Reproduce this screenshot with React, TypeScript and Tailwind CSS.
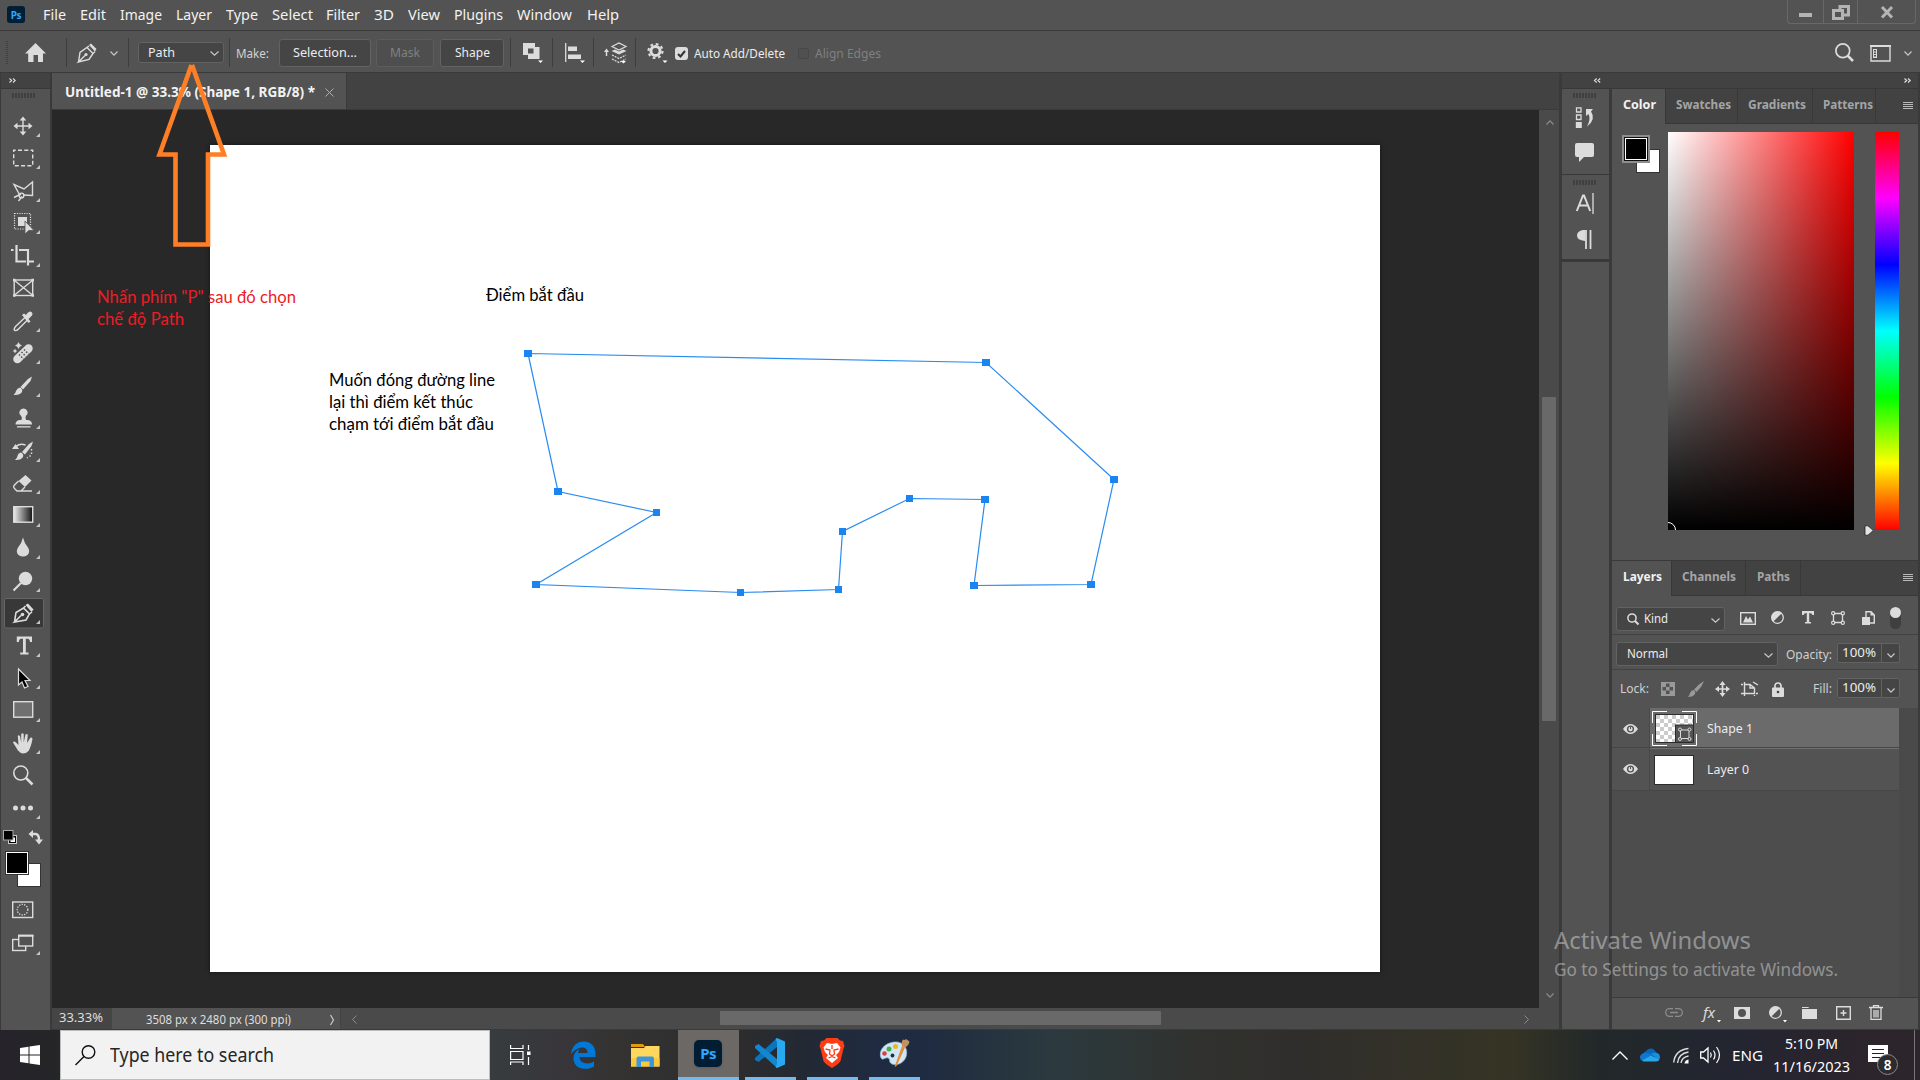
import React, { useLayoutEffect, useRef } from "react";

type Kids = { children?: React.ReactNode };

/* Single line of text condensed or widened to fill the width given by its class. */
function T({ className = "", children }: { className?: string } & Kids) {
  const box = useRef<HTMLSpanElement>(null);
  const inner = useRef<HTMLSpanElement>(null);
  useLayoutEffect(() => {
    const fit = () => {
      const b = box.current;
      const i = inner.current;
      if (!b || !i || !i.offsetWidth) return;
      i.style.transform = "none";
      const natural = i.getBoundingClientRect().width;
      i.style.transform = `scaleX(${b.getBoundingClientRect().width / natural})`;
    };
    fit();
    document.fonts?.ready.then(fit);
  }, []);
  return (
    <span ref={box} className={"block shrink-0 whitespace-nowrap " + className}>
      <span ref={inner} className="inline-block origin-left">
        {children}
      </span>
    </span>
  );
}

function Svg({ w, h, className = "", children }: { w: number; h: number; className?: string } & Kids) {
  return (
    <svg width={w} height={h} viewBox={`0 0 ${w} ${h}`} className={"block shrink-0 overflow-visible " + className} fill="none">
      {children}
    </svg>
  );
}

const L = "#dcdcdc";

function Chevron({ className = "", color = "#c8c8c8", w = 8 }: { className?: string; color?: string; w?: number }) {
  return (
    <Svg w={w} h={5} className={className}>
      <path d={`M.5 .5 L${w / 2} 4.2 L${w - 0.5} .5`} stroke={color} strokeWidth="1.2" />
    </Svg>
  );
}

function Sep({ className = "" }: { className?: string }) {
  return <div className={"h-[29px] w-px shrink-0 bg-[#3d3d3d] " + className} />;
}

const menus: [string, string][] = [
  ["File", "ml-[18px] w-[23px]"],
  ["Edit", "ml-[14px] w-[26px]"],
  ["Image", "ml-[14px] w-[42px]"],
  ["Layer", "ml-[14px] w-[36px]"],
  ["Type", "ml-[14px] w-[32px]"],
  ["Select", "ml-[14px] w-[41px]"],
  ["Filter", "ml-[13px] w-[34px]"],
  ["3D", "ml-[14px] w-[20px]"],
  ["View", "ml-[14px] w-[32px]"],
  ["Plugins", "ml-[14px] w-[49px]"],
  ["Window", "ml-[14px] w-[55px]"],
  ["Help", "ml-[15px] w-[32px]"],
];

function MenuBar() {
  return (
    <div className="flex h-[31px] shrink-0 border-b border-[#3a3a3a] bg-[#535353] text-[15px] leading-[28px] text-[#f2f2f2]">
      <div className="mt-[6px] ml-[7px] flex h-[17px] w-[18px] items-center justify-center rounded-[3px] bg-[#001e36] text-[10px] font-bold tracking-tight text-[#31a8ff]">
        <span className="leading-none">Ps</span>
      </div>
      {menus.map(([m, c]) => (
        <T key={m} className={c}>
          {m}
        </T>
      ))}
      <div className="mr-[4px] ml-auto flex h-[24px] w-[129px] rounded-b-[4px] border-x border-b border-[#686868]">
        <div className="w-[36px] border-r border-[#686868]">
          <div className="mt-[13px] ml-[11px] h-[4px] w-[13px] bg-[#b4b4b4]" />
        </div>
        <div className="w-[34px] border-r border-[#686868]">
          <Svg w={18} h={15} className="mt-[5px] ml-[8px]">
            <path d="M8 4V1.5H16.5V10H12" stroke="#b4b4b4" strokeWidth="3" />
            <rect x="1.5" y="5.5" width="9" height="8" stroke="#b4b4b4" strokeWidth="3" />
          </Svg>
        </div>
        <Svg w={14} h={11} className="mt-[7px] ml-[22px]">
          <path d="M2 0L12 10.5M12 0L2 10.5" stroke="#b4b4b4" strokeWidth="3" />
        </Svg>
      </div>
    </div>
  );
}

function OptionsBar() {
  return (
    <div className="flex h-[42px] shrink-0 items-center border-b border-[#3a3a3a] bg-[#535353] pt-[2px] text-[12.5px] text-[#ececec]">
      <Svg w={2} h={24} className="ml-[6px]">
        <path d="M1 0V24" stroke="#404040" strokeWidth="2" strokeDasharray="1 1" />
      </Svg>
      <Svg w={21} h={19} className="ml-[17px]">
        <path d="M10.5 0L21 10.5H18V19H13V12H8.5V19H3.2V10.5H0Z" fill={L} />
      </Svg>
      <Sep className="ml-[20px]" />
      <Svg w={20} h={20} className="ml-[10px]">
        <path d="M1.5 19L3 9.5L10 4.5L16 10.5L12 16.5L1.5 19L8 12.5M10 4.5L12 3M16 10.5L18 8.5" stroke={L} strokeWidth="1.4" />
        <circle cx="9" cy="11.5" r="1.6" fill={L} />
        <path d="M12 2L14 .5L19.5 6L18 8.5Z" fill={L} />
      </Svg>
      <Chevron className="mt-px ml-[13px]" />
      <Sep className="ml-[10px]" />
      <div className="ml-[9px] flex h-[21px] w-[86px] items-center rounded-[3px] border border-[#626262] bg-[#454545]">
        <T className="mt-px ml-[9px] w-[27px]">Path</T>
        <Chevron className="mt-[2px] ml-[35px]" w={9} />
      </div>
      <Sep className="ml-[5px]" />
      <T className="mt-[3px] ml-[6px] w-[33px] text-[#d2d2d2]">Make:</T>
      <div className="ml-[10px] flex h-[28px] w-[92px] items-center justify-center rounded-[3px] border border-[#626262] bg-[#454545]">
        <T className="mt-px w-[64px]">Selection...</T>
      </div>
      <div className="ml-[5px] flex h-[28px] w-[58px] items-center justify-center rounded-[3px] border border-[#5c5c5c] bg-[#4e4e4e] text-[#808080]">
        <T className="mt-px w-[30px]">Mask</T>
      </div>
      <div className="ml-[6px] flex h-[28px] w-[64px] items-center justify-center rounded-[3px] border border-[#626262] bg-[#454545]">
        <T className="mt-px w-[35px]">Shape</T>
      </div>
      <Sep className="ml-[6px]" />
      <Svg w={20} h={20} className="mt-px ml-[12px]">
        <path d="M0 0H12V4H16.5V16H5V12H0ZM5 5.5V10.5H10.5V5.5Z" fill={L} fillRule="evenodd" />
        <path d="M15 17.5h5l-2.5 2.5z" fill="#fff" />
      </Svg>
      <Sep className="ml-[9px]" />
      <Svg w={20} h={20} className="mt-px ml-[12px]">
        <path d="M.7 0V19" stroke={L} strokeWidth="1.3" />
        <path d="M3 3.5H12V8H3ZM3 11.5H16V16H3Z" fill={L} />
        <path d="M15 17.5h5l-2.5 2.5z" fill="#fff" />
      </Svg>
      <Sep className="ml-[8px]" />
      <Svg w={23} h={22} className="ml-[10px]">
        <path d="M2.5 14V8" stroke={L} strokeWidth="1.5" />
        <path d="M0 10L2.500 6.500L5 10Z" fill={L} />
        <path d="M8 4.500L15 1L22 4.500L15 8Z" stroke={L} strokeWidth="1.2" />
        <path d="M7.500 9L15 12.500L22.500 9L19 7.500L15 9.500L11 7.500Z" fill={L} />
        <path d="M8 13L15 16.500L22 13M8 17L15 20.500L22 17" stroke={L} strokeWidth="1.3" strokeDasharray="2 1" />
        <path d="M17 19h5l-2.500 2.500z" fill="#fff" />
      </Svg>
      <Sep className="ml-[8px]" />
      <Svg w={20} h={20} className="mt-px ml-[11px]">
        <circle cx="8.500" cy="8" r="4.600" stroke={L} strokeWidth="3" />
        <circle cx="8.500" cy="8" r="7" stroke={L} strokeWidth="2.200" strokeDasharray="2.750 2.750" />
        <path d="M15.500 17.500h5l-2.500 2.500z" fill="#fff" />
      </Svg>
      <div className="mt-[2px] ml-[8px] flex size-[13px] items-center justify-center rounded-[3px] bg-[#dcdcdc]">
        <Svg w={9} h={8}>
          <path d="M1 4L3.500 6.500L8 1" stroke="#333" strokeWidth="2" />
        </Svg>
      </div>
      <T className="mt-[4px] ml-[6px] w-[91px]">Auto Add/Delete</T>
      <div className="mt-[2px] ml-[13px] size-[11px] rounded-[2px] border border-[#484848] bg-[#505050]" />
      <T className="mt-[4px] ml-[6px] w-[66px] text-[#808080]">Align Edges</T>
      <Svg w={19} h={19} className="mr-[16px] ml-auto">
        <circle cx="7.800" cy="7.800" r="6.900" stroke={L} strokeWidth="1.700" />
        <path d="M12.500 12.500L18 18" stroke={L} strokeWidth="2.500" />
      </Svg>
      <Svg w={21} h={17} className="mt-[2px] mr-[13px]">
        <path d="M1 1H20V16H1Z" stroke={L} strokeWidth="1.400" />
        <path d="M0 1H21" stroke={L} strokeWidth="2" />
        <path d="M3 4H7V13H3Z" fill={L} />
        <path d="M5 5V12.500" stroke="#535353" strokeWidth="2" strokeDasharray="1.500 1" />
      </Svg>
      <Chevron className="mt-[2px] mr-[8px]" />
    </div>
  );
}

/* Tool glyphs are drawn around the point (23, 16) of a 50 x 32 cell. */
const S = { stroke: L, strokeWidth: 1.4 };
const tools: React.ReactNode[] = [
  <g>
    <path d="M23 9V23M16 16H30" {...S} />
    <path d="M23 6.500l3.300 4h-6.600zM23 25.500l3.300-4h-6.600zM13.500 16l4-3.300v6.600zM32.500 16l-4-3.300v6.600z" fill={L} />
  </g>,
  <rect x="13.700" y="8.200" width="19" height="15.500" {...S} strokeDasharray="4 2.300" strokeDashoffset="2" />,
  <g {...S}>
    <path d="M20 20.500L14 9.500L24 14L32.500 7V20.500L23 20" />
    <circle cx="21.500" cy="20.500" r="2.400" />
    <path d="M14 22.500L21 19M18.500 26L22 21.500" />
  </g>,
  <g>
    <rect x="14.500" y="6.500" width="16" height="15.500" stroke={L} strokeWidth="1.200" strokeDasharray="1.200 1.200" />
    <path d="M18 10H27V16L25 15V19H18Z" fill={L} />
    <path d="M25 14L34 23.500H28.800L25 27Z" fill={L} stroke="#535353" strokeWidth=".8" />
  </g>,
  <g stroke={L} strokeWidth="2.200" transform="translate(0 -1)">
    <path d="M16.500 6V22.500H26M29 22.500H34" />
    <path d="M11 11H13.500M19 11H28V26.500" />
  </g>,
  <g {...S}>
    <rect x="14.200" y="8" width="18.500" height="15.500" />
    <path d="M14 8L33 23.500M33 8L14 23.500" />
    <path d="M13 8h2.500M13 23.500h2.500M31.500 8h2.500M31.500 23.500h2.500" strokeWidth="2.500" />
  </g>,
  <g>
    <path d="M25 12.500L15.500 21.500Q13 25 15 25.500Q17 26 19 23.500L27.500 15" {...S} />
    <path d="M22 10L24 8.500L26 10Q28 6.500 30.500 6.500Q33.500 8 32 10.500L28.500 14L30.500 16.500L28.500 18Z" fill={L} />
  </g>,
  <g>
    <path d="M17.500 22L28.500 11.500" stroke={L} strokeWidth="8.500" strokeLinecap="round" />
    <path d="M21.500 15L26 19.500M19 17.500L23.500 22M24 12.500L28.500 17" stroke="#535353" strokeWidth="1.500" strokeDasharray="1.500 1.500" />
    <path d="M18.500 5l1.200 2.300 2.300 1.200-2.300 1.200-1.200 2.300-1.200-2.300-2.300-1.200 2.300-1.200zM15 11.500l.8 1.700 1.700.8-1.700.8-.8 1.700-.8-1.700-1.700-.8 1.700-.8z" fill={L} />
  </g>,
  <g fill={L}>
    <path d="M32 6.500L30.500 11L23 19.500L20.500 17L28 9Z" />
    <path d="M20 17.500Q23 19 22 22Q20 25.500 13.500 25Q15.500 23.500 16 21Q17 18 20 17.500Z" />
  </g>,
  <g fill={L}>
    <path d="M23.500 6.500a4 4 0 0 1 2.500 7.200Q25 15 26 18H28Q32 18.500 32 22.500H15.500Q15.500 18.500 19.500 18H21.500Q22.500 15 21 13.700A4 4 0 0 1 23.500 6.500Z" />
    <path d="M17 24.200H30.500V25.500H17Z" />
  </g>,
  <g fill={L}>
    <path d="M33 6.500L31.500 11L25 19.500L22 17L29 9Z" />
    <path d="M21 17.500Q24 19 23 22Q21 25.500 15 25Q17 23.500 17.500 21Q18 18 21 17.500Z" />
    <path d="M12 14L15.500 9L19 14Z" />
    <path d="M16 11.500Q20 8 25.500 10" stroke={L} strokeWidth="1.400" fill="none" />
    <path d="M31.500 14V20L27 23" stroke={L} strokeWidth="1.500" strokeDasharray="1.500 2" fill="none" />
  </g>,
  <g>
    <path d="M25.500 8L31.500 13.500L25 20L18.500 14Z" fill={L} />
    <path d="M18.500 14L14 18.500Q13 20 14.500 21.500L17 24H21L25 20M17 24H32" {...S} />
  </g>,
  <g>
    <rect x="13.700" y="6.700" width="19" height="15.500" fill="url(#gradtool)" {...S} />
  </g>,
  <path d="M23 6.500Q24 11.500 28 16.500Q30.500 21 27.500 24Q23 27 18.500 24Q15.500 21 18 16.500Q22 11.500 23 6.500Z" fill={L} transform="translate(0 -1)" />,
  <g>
    <circle cx="25.500" cy="13.500" r="6.700" fill={L} />
    <path d="M13.500 25.500L21 18" stroke={L} strokeWidth="2.200" />
  </g>,
  <g>
    <path d="M14.500 25L16 15.500L23.500 11L29.500 17L26 23L14.500 25L21 18.500M23.500 11L25.500 9M29.500 17L32 15" {...S} strokeWidth="1.600" />
    <circle cx="22.500" cy="17.500" r="1.800" fill={L} />
    <path d="M25.500 8L28 6.500L33.500 12.500L31.500 15Z" fill={L} />
  </g>,
  <path d="M16.800 6.500H32V12H30Q30 9 28 8.700H25.800V22.500H28.500V24.500H20.200V22.500H23V8.700H20.800Q18.800 9 18.800 12H16.800Z" fill={L} />,
  <path d="M18.500 7L30 18.500H25L28 24.500L24.500 26L22 20L18.500 23Z" fill="#000" stroke={L} strokeWidth="1.200" />,
  <rect x="13.700" y="6.700" width="19" height="15.500" fill="#707070" {...S} />,
  <path d="M18 23.500L13 15.500Q13.500 14 15.500 15L18.500 18L17.800 9Q18.500 7.500 20 9L21.200 15.500V7Q22.500 5.500 23.700 7V15.500L25.500 7.500Q27 6.500 27.800 8L27 16L30.500 10.500Q32.500 10 32.500 12Q31 20 28.500 24Q26 26.500 23 26.500Q20 26 18 23.500Z" fill={L} />,
  <g>
    <circle cx="20.800" cy="13" r="7" {...S} strokeWidth="1.600" />
    <path d="M26 18L32.500 24.500" stroke={L} strokeWidth="2.500" />
  </g>,
  <g fill={L}>
    <circle cx="15.500" cy="16" r="2.500" />
    <circle cx="23" cy="16" r="2.500" />
    <circle cx="30.500" cy="16" r="2.500" />
  </g>,
];

function Grip({ className = "" }: { className?: string }) {
  return (
    <Svg w={24} h={5} className={className}>
      <path d="M0 2.500H24" stroke="#404040" strokeWidth="5" strokeDasharray="2 1" />
    </Svg>
  );
}

function ToolColumn() {
  return (
    <div className="flex w-[50px] shrink-0 flex-col border-l border-[#3a3a3a] bg-[#535353]">
      <div className="flex h-[16px] items-center border-b border-[#383838] bg-[#424242] pl-[8px]">
        <Svg w={7} h={5}>
          <path d="M.5 .5L2.700 2.500L.5 4.500M4 .5L6.200 2.500L4 4.500" stroke="#dcdcdc" strokeWidth="1.100" />
        </Svg>
      </div>
      <Grip className="mt-[4px] ml-[11px]" />
      <div className="mt-[12px] -ml-px flex flex-col">
        {tools.map((t, i) => (
          <div key={i} className={i % 2 ? "h-[33px]" : "h-[32px]"}>
            <Svg w={50} h={32}>
              <defs>
                <linearGradient id="gradtool">
                  <stop offset="0" stopColor="#eee" />
                  <stop offset="1" stopColor="#111" />
                </linearGradient>
              </defs>
              {i === 15 && <rect x="4.500" y="1.500" width="39" height="29.500" rx="1.500" fill="#383838" stroke="#666" />}
              {t}
              {i !== 20 && i !== 5 && <path d="M40 23V27H36Z" fill="#c4c4c4" />}
            </Svg>
          </div>
        ))}
      </div>
      <Svg w={50} h={66} className="mt-[3px] -ml-px">
        <g transform="translate(0 -828)">
          <rect x="8.500" y="835.500" width="8" height="8" fill="#000" stroke="#ccc" />
          <rect x="10.500" y="837.500" width="4.500" height="4.500" fill="#fff" />
          <rect x="3.500" y="830.500" width="9.500" height="9.500" fill="#000" stroke="#aaa" />
          <path d="M32 834H36Q39 834.500 39 840" stroke={L} strokeWidth="2.500" />
          <path d="M28.500 834L33 830V838ZM35 839.500H43L39 844.500Z" fill={L} />
          <rect x="17.500" y="863.500" width="23" height="23" fill="#fff" stroke="#333" />
          <rect x="5.500" y="851.500" width="23" height="23" fill="#fff" stroke="#333" />
          <rect x="7" y="853" width="20" height="20" fill="#000" />
        </g>
      </Svg>
      <Svg w={50} h={56} className="-ml-px">
        <g transform="translate(0 -894)">
          <rect x="12.700" y="902" width="20" height="15.500" {...S} />
          <circle cx="22.500" cy="909.700" r="5.300" stroke={L} strokeWidth="1.300" strokeDasharray="1.300 1.300" />
          <rect x="12.700" y="939.500" width="13" height="11" {...S} />
          <rect x="18.700" y="935.500" width="14" height="10.500" fill="#535353" {...S} />
          <path d="M18 935.700H33.500" stroke={L} strokeWidth="2" />
          <path d="M40 951V955H36Z" fill="#c4c4c4" />
        </g>
      </Svg>
    </div>
  );
}

const pts: [number, number][] = [
  [528, 353.5], [986, 362.5], [1114, 479.5], [1091, 584.5], [974, 585.5], [985, 499.5], [909.5, 498.5],
  [842.5, 531.5], [838.5, 589.5], [740.5, 592.5], [536, 584.5], [656.5, 512.5], [558, 491.5],
];

function DocumentArea() {
  return (
    <div className="flex w-[1507px] shrink-0 flex-col">
      <div className="flex h-[37px] border-b border-[#3a3a3a] bg-[#424242]">
        <div className="flex w-[295px] items-center border-r border-[#3a3a3a] bg-[#535353] pt-[2px] text-[13.5px] font-bold text-[#f2f2f2]">
          <T className="ml-[13px] w-[250px]">Untitled-1 @ 33.3% (Shape 1, RGB/8) *</T>
          <Svg w={9} h={9} className="ml-[10px]">
            <path d="M.5 .5L8.500 8.500M8.500 .5L.5 8.500" stroke="#b0b0b0" />
          </Svg>
        </div>
      </div>
      <div className="flex h-[898px]">
        <div className="w-[1487px] bg-[#282828] pt-[35px] pl-[158px]">
          <div className="h-[827px] w-[1170px] bg-white shadow-[0_0_5px_rgba(0,0,0,0.5)]">
            <Svg w={1170} h={827}>
              <g transform="translate(-210 -145)">
                <polygon points={pts.map((p) => p.join(",")).join(" ")} stroke="#2a8cf0" strokeWidth="1.200" />
                {pts.map(([x, y]) => (
                  <rect key={x} x={Math.round(x - 4)} y={y - 3.5} width={x % 1 ? 7 : 8} height="7" fill="#1a85f0" />
                ))}
              </g>
            </Svg>
          </div>
        </div>
        <div className="flex w-[20px] flex-col items-center bg-[#4a4a4a]">
          <Chevron className="mt-[10px] ml-[2px] rotate-180" color="#8c8c8c" />
          <div className="mt-[272px] mr-[1px] h-[324px] w-[14px] rounded-[1px] bg-[#696969]" />
          <Chevron className="mt-[272px] ml-[2px]" color="#8c8c8c" />
        </div>
      </div>
      <div className="flex h-[21px] items-center bg-[#4a4a4a] text-[12.5px] text-[#dedede]">
        <div className="flex h-full w-[60px] items-center bg-[#454545]">
          <T className="-mt-px ml-[7px] w-[44px] text-[13px]">33.33%</T>
        </div>
        <div className="flex h-full w-[229px] items-center border-r border-[#454545] bg-[#535353]">
          <T className="mt-[3px] ml-[34px] w-[145px]">3508 px x 2480 px (300 ppi)</T>
          <Svg w={4} h={10} className="mt-[2px] ml-[39px]">
            <path d="M.5 0L3.500 5L.5 10" stroke="#ccc" strokeWidth="1.200" />
          </Svg>
        </div>
        <Svg w={5} h={9} className="mt-[2px] ml-[11px]">
          <path d="M4.500 .5L.5 4.500L4.500 8.500" stroke="#8c8c8c" />
        </Svg>
        <div className="mb-[1px] ml-[363px] h-[14px] w-[441px] rounded-[1px] bg-[#696969]" />
        <Svg w={5} h={9} className="mt-[1px] ml-[363px]">
          <path d="M.5 .5L4.500 4.500L.5 8.500" stroke="#8c8c8c" />
        </Svg>
      </div>
      <div className="h-px bg-[#3a3a3a]" />
    </div>
  );
}

function PanelMenu() {
  return (
    <Svg w={10} h={8} className="mr-[5px] mb-px ml-auto">
      <path d="M0 .5H10M0 2.500H10M0 4.500H10M0 6.500H10" stroke="#b8b8b8" />
    </Svg>
  );
}

function ColorPanel() {
  return (
    <div className="h-[471px] bg-[#535353]">
      <div className="flex h-[35px] text-[13px] font-bold text-[#a5a5a5]">
        <div className="flex w-[53px] items-center pb-[4px] pl-[11px] text-[#f2f2f2]">
          <T className="w-[33px]">Color</T>
        </div>
        <div className="flex grow items-center border-b border-l border-[#383838] bg-[#424242]">
          <div className="flex h-full w-[72px] items-center border-r border-[#383838] pb-[3px] pl-[10px]">
            <T className="w-[55px]">Swatches</T>
          </div>
          <div className="flex h-full w-[75px] items-center border-r border-[#383838] pb-[3px] pl-[10px]">
            <T className="w-[58px]">Gradients</T>
          </div>
          <div className="flex h-full w-[63px] items-center border-r border-[#383838] pb-[3px] pl-[10px]">
            <T className="w-[50px]">Patterns</T>
          </div>
          <PanelMenu />
        </div>
      </div>
      <div className="flex pt-[8px] pl-[10px]">
        <Svg w={38} h={38} className="mt-[3px]">
          <rect x="14.500" y="14.500" width="23" height="23" fill="#fff" stroke="#333" />
          <rect x="0" y="0" width="28" height="28" fill="#8e8e8e" />
          <rect x="2" y="2" width="24" height="24" fill="#111" />
          <rect x="3" y="3" width="22" height="22" fill="#fff" />
          <rect x="4" y="4" width="20" height="20" fill="#000" />
        </Svg>
        <div className="relative ml-[8px] h-[398px] w-[186px] overflow-hidden bg-[linear-gradient(to_top,#000,transparent),linear-gradient(to_right,#fff,#f00)]">
          <div className="absolute -bottom-[8px] -left-[8px] size-[16px] rounded-full border border-white" />
        </div>
        <Svg w={10} h={11} className="mt-[393px] ml-[10px]">
          <path d="M1 .8H4L9.300 5.500L4 10.200H1Z" fill="#e4e4e4" stroke="#222" strokeWidth=".8" />
        </Svg>
        <div className="ml-[1px] h-[398px] w-[24px] bg-[linear-gradient(to_bottom,#f00,#f0f,#00f,#0ff,#0f0,#ff0,#f00)]" />
      </div>
    </div>
  );
}

function Vector({ className = "", w = 14 }: { className?: string; w?: number }) {
  return (
    <svg width={w} height={w} viewBox="0 0 14 14" fill="none" className={"block shrink-0 " + className}>
      <path d="M2.500 2.500H11.500V11.500H2.500Z" stroke={L} strokeWidth="1.300" />
      {[2.2, 11.8].map((x) => [2.2, 11.8].map((y) => <circle key={`${x}${y}`} cx={x} cy={y} r="1.600" fill="#535353" stroke={L} strokeWidth="1.200" />))}
    </svg>
  );
}

function Half({ className = "" }: { className?: string }) {
  return (
    <Svg w={13} h={13} className={className}>
      <circle cx="6.500" cy="6.500" r="5.800" stroke={L} strokeWidth="1.300" />
      <path d="M10.800 2.200A6 6 0 0 0 2.200 10.800Z" fill={L} />
    </Svg>
  );
}

function Eye() {
  return (
    <Svg w={15} h={10} className="ml-[11px]">
      <path d="M0 5Q3.500 0 7.500 0T15 5Q11.500 10 7.500 10T0 5Z" fill={L} />
      <circle cx="7.500" cy="5" r="3.600" fill="#535353" />
      <circle cx="7.500" cy="5" r="2.200" fill={L} />
      <path d="M7.500 3V5" stroke="#535353" />
    </Svg>
  );
}

function Percent({ className = "" }: { className?: string }) {
  return (
    <div className={"flex h-[20px] w-[63px] items-center rounded-[2px] border border-[#626262] bg-[#454545] " + className}>
      <T className="-mt-px ml-[4px] w-[34px] text-[13px]">100%</T>
      <div className="ml-[5px] h-full w-px bg-[#626262]" />
      <Chevron className="mt-[4px] ml-[5px]" />
    </div>
  );
}

function LayersPanel() {
  return (
    <div className="flex grow flex-col bg-[#535353] text-[13px] text-[#ececec]">
      <div className="flex h-[35px] font-bold text-[#a5a5a5]">
        <div className="flex w-[59px] items-center pb-[4px] pl-[11px] text-[#f2f2f2]">
          <T className="w-[39px]">Layers</T>
        </div>
        <div className="flex grow items-center border-b border-l border-[#383838] bg-[#424242]">
          <div className="flex h-full w-[74px] items-center border-r border-[#383838] pb-[3px] pl-[10px]">
            <T className="w-[54px]">Channels</T>
          </div>
          <div className="flex h-full w-[55px] items-center border-r border-[#383838] pb-[3px] pl-[11px]">
            <T className="w-[33px]">Paths</T>
          </div>
          <PanelMenu />
        </div>
      </div>
      <div className="flex h-[39px] items-start border-b border-[#424242] pt-[11px] pl-[4px]">
        <div className="flex h-[24px] w-[109px] items-center rounded-[3px] border border-[#626262] bg-[#454545]">
          <Svg w={12} h={12} className="ml-[10px]">
            <circle cx="5" cy="5" r="4.100" stroke={L} strokeWidth="1.500" />
            <path d="M8 8L11.500 11.500" stroke={L} strokeWidth="2" />
          </Svg>
          <T className="-mt-px ml-[5px] w-[24px]">Kind</T>
          <Chevron className="mt-[2px] ml-[43px]" w={9} />
        </div>
        <Svg w={16} h={13} className="mt-[5px] ml-[15px]">
          <rect x=".7" y=".7" width="14.600" height="11.600" stroke={L} strokeWidth="1.400" />
          <path d="M3 10.500L6 4L8 7.500L10 4.500L13 10.500Z" fill={L} />
        </Svg>
        <Half className="mt-[4px] ml-[15px]" />
        <Svg w={12} h={13} className="mt-[4px] ml-[18px]">
          <path d="M0 0H12V4H10.500Q10 2 7.200 2V11H9V12.500H3V11H4.800V2Q2 2 1.500 4H0Z" fill={L} />
        </Svg>
        <Vector className="mt-[4px] ml-[17px]" />
        <Svg w={13} h={15} className="mt-[4px] ml-[17px]">
          <path d="M4 7V.7H9L12.300 4V12H8" stroke={L} strokeWidth="1.400" />
          <path d="M8.500 0V4.500H13M0 6H8V14H0Z" fill={L} />
        </Svg>
        <div className="ml-[15px] h-[22px] w-[11px] rounded-full bg-[#3f3f3f]">
          <div className="size-[11px] rounded-full bg-[#dcdcdc]" />
        </div>
      </div>
      <div className="flex h-[35px] items-start border-b border-[#424242] pt-[7px] pl-[4px]">
        <div className="flex h-[24px] w-[162px] items-center rounded-[3px] border border-[#626262] bg-[#454545]">
          <T className="-mt-px ml-[10px] w-[41px]">Normal</T>
          <Chevron className="mt-[2px] ml-[96px]" w={9} />
        </div>
        <T className="mt-[3px] ml-[8px] w-[46px] text-[#d0d0d0]">Opacity:</T>
        <Percent className="mt-[1px] ml-[5px]" />
      </div>
      <div className="flex h-[38px] items-center pl-[8px]">
        <T className="w-[29px] text-[#d0d0d0]">Lock:</T>
        <Svg w={14} h={14} className="mb-px ml-[12px]">
          <rect width="14" height="14" fill="#999" />
          <path d="M5 1.500H8.500V5H5ZM1.500 5H5V8.500H1.500ZM8.500 5H12V8.500H8.500ZM5 8.500H8.500V12H5Z" fill="#535353" />
        </Svg>
        <Svg w={16} h={16} className="ml-[13px]">
          <path d="M16 0L13 6L8.500 11L6 8.500L11 3.500ZM5.500 9Q8 10 7 13Q5 16 0 16Q1.500 14.500 2 12Q3 9.500 5.500 9Z" fill="#999" />
        </Svg>
        <Svg w={15} h={16} className="mb-px ml-[11px]">
          <path d="M7.500 2V14M2 8H13" stroke={L} strokeWidth="1.700" />
          <path d="M7.500 0l3 4h-6zM7.500 16l3-4h-6zM0 8l4-3v6zM15 8l-4-3v6z" fill={L} />
        </Svg>
        <Svg w={17} h={14} className="mb-px ml-[11px]">
          <path d="M3.500 0V14M0 2.500H2M3.500 2.500H9L13.500 6V11.500H0M15 11.500H17M13.500 13V14M9 2.500V6H13.500M12 0L17 3" stroke={L} strokeWidth="1.400" />
        </Svg>
        <Svg w={12} h={15} className="ml-[14px]">
          <path d="M3 7V4Q3 1 6 1T9 4V7" stroke={L} strokeWidth="1.700" />
          <rect y="5.500" width="12" height="9.500" rx="1" fill={L} />
          <circle cx="6" cy="10" r="1.300" fill="#444" />
        </Svg>
        <T className="ml-[29px] w-[19px] text-[#d0d0d0]">Fill:</T>
        <Percent className="-mt-[2px] ml-[5px]" />
      </div>
      <div className="flex grow">
        <div className="flex w-[287px] flex-col">
          <div className="flex h-[39px]">
            <div className="flex w-[38px] items-center border-r border-[#484848] pt-[3px]">
              <Eye />
            </div>
            <div className="flex grow items-center bg-[#6b6b6b]">
              <Svg w={45} h={35} className="mt-[2px] ml-[2px]">
                <defs>
                  <pattern id="checks" width="8" height="8" patternUnits="userSpaceOnUse">
                    <rect width="8" height="8" fill="#fff" />
                    <path d="M0 0H4V4H0ZM4 4H8V8H4Z" fill="#ccc" />
                  </pattern>
                </defs>
                <path d="M.5 12V.5H15M30 .5H44.500V12M44.500 23V34.500H30M15 34.500H.5V23" stroke="#fff" />
                <rect x="3.500" y="3.500" width="38" height="28" fill="url(#checks)" stroke="#2c2c2c" />
                <rect x="23.500" y="14" width="18" height="17.500" fill="#535353" stroke="#2c2c2c" />
                <g transform="translate(26 16.500)" stroke={L}>
                  <path d="M2.500 2.500H11V11H2.500Z" />
                  {[2, 11.5].map((x) => [2, 11.5].map((y) => <circle key={`${x}${y}`} cx={x} cy={y} r="1.500" fill="#535353" />))}
                </g>
              </Svg>
              <T className="mt-[3px] ml-[10px] w-[46px]">Shape 1</T>
            </div>
          </div>
          <div className="flex h-[44px] border-t border-b border-[#464646]">
            <div className="flex w-[38px] items-center border-r border-[#484848]">
              <Eye />
            </div>
            <div className="flex grow items-center border-t border-[#707070]">
              <div className="ml-[4px] h-[30px] w-[40px] border border-[#2c2c2c] bg-white" />
              <T className="ml-[13px] w-[42px]">Layer 0</T>
            </div>
          </div>
          <div className="grow bg-[#4d4d4d]" />
        </div>
        <div className="grow bg-[#4a4a4a]" />
      </div>
      <div className="flex h-[32px] items-center border-t border-[#3a3a3a] pb-[2px] pl-[53px]">
        <Svg w={18} h={9}>
          <path d="M8 .7H4.500A3.800 3.800 0 0 0 4.500 8.300H8M10 .7H13.500A3.800 3.800 0 0 1 13.500 8.300H10M5 4.500H13" stroke="#8c8c8c" strokeWidth="1.300" />
        </Svg>
        <span className="ml-[20px] w-[13px] text-[15px] leading-none text-[#dcdcdc] italic">fx</span>
        <Svg w={4} h={3} className="mt-[17px] ml-[1px]">
          <path d="M0 0H4L2 2.500Z" fill="#fff" />
        </Svg>
        <Svg w={16} h={12} className="ml-[13px]">
          <path d="M0 0H16V12H0ZM8 2A4 4 0 1 0 8 10A4 4 0 1 0 8 2Z" fill={L} fillRule="evenodd" />
        </Svg>
        <Half className="ml-[19px]" />
        <Svg w={4} h={3} className="mt-[17px] ml-[1px]">
          <path d="M0 0H4L2 2.500Z" fill="#fff" />
        </Svg>
        <Svg w={15} h={12} className="ml-[15px]">
          <path d="M0 0H6L7.500 1H0ZM0 2H15V12H0Z" fill={L} />
        </Svg>
        <Svg w={15} h={14} className="ml-[19px]">
          <path d="M.7 .7H14.300V13.300H.7ZM7.500 4V10M4.500 7H10.500" stroke={L} strokeWidth="1.400" />
        </Svg>
        <Svg w={14} h={15} className="ml-[18px]">
          <path d="M0 2.500H14M4.500 2.500V.7H9.500V2.500M2 3V14.300H12V3M5 5V12.500M7 5V12.500M9 5V12.500" stroke={L} strokeWidth="1.300" />
        </Svg>
      </div>
    </div>
  );
}

function RightDock() {
  return (
    <div className="flex w-[356px] shrink-0 flex-col">
      <div className="flex h-[16px] items-center justify-between border-b border-[#383838] bg-[#424242] pr-[7px] pl-[32px]">
        <Svg w={7} h={5}>
          <path d="M2.700 .5L.5 2.500L2.700 4.500M6.200 .5L4 2.500L6.200 4.500" stroke="#dcdcdc" strokeWidth="1.200" />
        </Svg>
        <Svg w={7} h={5}>
          <path d="M.5 .5L2.700 2.500L.5 4.500M4 .5L6.200 2.500L4 4.500" stroke="#dcdcdc" strokeWidth="1.200" />
        </Svg>
      </div>
      <div className="flex grow">
        <div className="flex w-[47px] flex-col">
          <div className="h-[86px] border-b border-[#383838] bg-[#535353]">
            <Grip className="mt-[4px] ml-[11px]" />
            <Svg w={19} h={21} className="mt-[9px] ml-[13px]">
              <path d="M1.500 .8H6V5H1.500ZM1.500 8H6V12.500H1.500Z" stroke={L} strokeWidth="1.300" />
              <path d="M.8 15H6.800V21H.8Z" fill={L} />
              <path d="M11 2H18L16 4.500Q21.500 12.500 12 19.500Q16 12 13.500 7L11 9Z" fill={L} />
            </Svg>
            <Svg w={19} h={19} className="mt-[15px] ml-[13px]">
              <path d="M2 0H17Q19 0 19 2V12Q19 14 17 14H9L4 19V14H2Q0 14 0 12V2Q0 0 2 0Z" fill={L} />
            </Svg>
          </div>
          <div className="h-[86px] border-b-2 border-[#383838] bg-[#535353] text-[#dcdcdc]">
            <Grip className="mt-[5px] ml-[11px]" />
            <Svg w={18} h={21} className="mt-[8px] ml-[14px]">
              <path d="M.8 18L7 2.500H8L14.200 18M3 12.500H12" stroke={L} strokeWidth="2" />
              <path d="M17 0V21" stroke={L} strokeWidth="1.300" />
            </Svg>
            <Svg w={15} h={19} className="mt-[16px] ml-[15px]">
              <path d="M15 0H6Q0 1 0 5.500T8 11V0Z" fill={L} />
              <path d="M9 0V19M13.500 0V19" stroke={L} strokeWidth="1.800" />
            </Svg>
          </div>
          <div className="mt-[1px] grow bg-[#535353]" />
        </div>
        <div className="ml-[3px] flex w-[306px] flex-col gap-px">
          <ColorPanel />
          <LayersPanel />
        </div>
      </div>
      <div className="h-px" />
    </div>
  );
}

function TaskApp({ className, children }: { className: string } & Kids) {
  return (
    <div className={"flex h-full shrink-0 flex-col items-center " + className}>
      <div className="flex h-[47px] items-center pb-px">{children}</div>
      <div className="h-[3px] w-full bg-[#76b9ed]" />
    </div>
  );
}

function Taskbar() {
  return (
    <div className="flex h-[50px] shrink-0 items-center bg-[linear-gradient(90deg,#25232a_0px,#252628_60px,#373c3f_490px,#38363a_560px,#343332_610px,#2c2c2e_745px,#232933_800px,#1f2b41_880px,#1f2b40_930px,#2b3a3f_1050px,#30322f_1190px,#302e2c_1300px,#353424_1510px,#22282a_1600px,#232531_1740px,#2b242c_1850px,#2c262b_1920px)] text-white">
      <Svg w={20} h={20} className="ml-[20px]">
        <path d="M0 3L8.500 1.800V9.500H0ZM9.500 1.600L20 0V9.500H9.500ZM0 10.500H8.500V18.200L0 17ZM9.500 10.500H20V20L9.500 18.400Z" fill="#fff" />
      </Svg>
      <div className="ml-[20px] flex h-full w-[430px] items-center border border-[#bdbdbd] bg-[#f2f2f2] text-[19px] text-[#262626]">
        <Svg w={21} h={21} className="ml-[14px]">
          <circle cx="13.500" cy="7" r="6.300" stroke="#111" strokeWidth="1.400" />
          <path d="M9 11.500L.5 20" stroke="#111" strokeWidth="1.400" />
        </Svg>
        <T className="ml-[14px] w-[164px]">Type here to search</T>
      </div>
      <Svg w={20} h={20} className="ml-[20px]">
        <path d="M.6 0V3.500H13V0M.6 6.500H13V14.500H.6ZM.6 20V17H13V20M18.500 0V5M18.500 12V20" stroke="#fff" strokeWidth="1.200" />
        <rect x="17" y="6.500" width="3.500" height="3.500" fill="#fff" />
      </Svg>
      <Svg w={25} h={28} className="ml-[41px]">
        <path d="M0 13C1 5 6 .5 13 .5C20 .5 24.500 5.500 24.500 12.500V16H8.500C8.700 23 18 24 23 20.500V25.500C15 30 3 28 2.500 18C2.300 13 5 9.500 9 8C7.500 9.500 7 11 7 12H16.500C16.500 4 6 5 0 13Z" fill="#0078d7" />
      </Svg>
      <Svg w={29} h={23} className="ml-[35px]">
        <path d="M0 0H12L14 3H0Z" fill="#e09c10" />
        <path d="M0 4H13L14.500 2H28.500V22.500H0Z" fill="#ffd75e" />
        <path d="M0 14H28.500V22.500H0Z" fill="#fbc93c" />
        <path d="M5.500 23V14.500Q5.500 12.500 7.500 12.500H21Q23 12.500 23 14.500V23H18.500V17.500H10V23Z" fill="#3c96dc" />
      </Svg>
      <TaskApp className="ml-[18px] w-[61px] bg-[#6c6866]">
        <div className="mr-px flex h-[27px] w-[28px] items-center justify-center rounded-[5px] bg-[#001d34] text-[15px] font-bold tracking-tighter text-[#31a8ff] shadow">
          Ps
        </div>
      </TaskApp>
      <TaskApp className="ml-[6px] w-[51px]">
        <Svg w={30} h={30} className="mr-[2px]">
          <path d="M22 0L0 20V22L3.500 24L22 9Z" fill="#0a74bd" />
          <path d="M22 30L0 10V8L3.500 6L22 21Z" fill="#1287cf" />
          <path d="M22 0L30 3.500V26.500L22 30L20.500 29L22 26V4L20.500 1Z" fill="#29a8f2" />
        </Svg>
      </TaskApp>
      <TaskApp className="ml-[11px] w-[51px]">
        <Svg w={26} h={30} className="mr-px">
          <path d="M7.500 0H18.500L21 2.500L24 3L25.500 8L24.500 10.500L21.500 23Q20 26 13 30Q6 26 4.500 23L1.500 10.500L.5 8L2 3L5 2.500Z" fill="#ff3d14" />
          <path d="M8 5L13 6L18 5L21.500 9.500L20 14L17 17L19 20L13 25L7 20L9 17L6 14L4.500 9.500Z" fill="#fff" />
          <path d="M6.500 11L11 12L10.500 16L13 18L15.500 16L15 12L19.500 11M9.500 20L13 18.500L16.500 20M13 7V11" stroke="#ff3d14" strokeWidth="1.300" />
        </Svg>
      </TaskApp>
      <TaskApp className="ml-[11px] w-[51px]">
        <Svg w={31} h={30} className="mr-px">
          <path d="M15 4C23 3 29 9 27.500 17C26 25 18 28 13 26C9 24 12 21 9 20C6 19 4 23 2 20C-1 12 6 5 15 4Z" fill="#cfe6f5" stroke="#8fb7d3" strokeWidth=".7" />
          <circle cx="5.500" cy="15.500" r="2.300" fill="#e03c3c" />
          <circle cx="10" cy="11" r="2.500" fill="#43b04a" />
          <circle cx="16.500" cy="8.500" r="2.500" fill="#f0b323" />
          <circle cx="13.500" cy="17.500" r="1.900" fill="#20303e" />
          <path d="M23 8L26 9.500L17.500 28L15.500 29Z" fill="#e58e35" />
          <path d="M23 8Q22 4 24 1.500Q25.500 2.500 27 1L30.500 3.500Q29.500 8 26 9.500Z" fill="#c49062" />
        </Svg>
      </TaskApp>
      <Svg w={16} h={9} className="ml-[692px]">
        <path d="M.5 8.500L8 1L15.500 8.500" stroke="#fff" strokeWidth="1.400" />
      </Svg>
      <Svg w={20} h={14} className="ml-[12px]">
        <path d="M3 8Q3 4 6 3Q8 0 11.500 .5Q15 1 16 5L10 9Z" fill="#0a64b8" />
        <path d="M11 6Q13 4 16 4.500Q20 5.500 20 9.500Q20 11 18 12Z" fill="#1490df" />
        <path d="M4 5Q0 6 0 9.500Q.5 13 4 13L13 8Q9 4 4 5Z" fill="#1176d0" />
        <path d="M2 12.500L11 7.500L19.500 11.500Q18.500 13.500 16 13.500H4Q3 13.500 2 12.500Z" fill="#28a8ea" />
      </Svg>
      <Svg w={16} h={17} className="ml-[13px]">
        <path d="M.7 15.500Q2 3 15.500 1.500M4.500 16Q5.500 6.500 15.500 5M8 16Q9 10 15.500 9" stroke="#ddd" strokeWidth="1.400" />
        <path d="M11.500 16.500Q12 13 15.500 12.500V16.500Z" fill="#fff" />
      </Svg>
      <Svg w={21} h={18} className="ml-[11px]">
        <path d="M.7 6H3.500L8 2V16L3.500 12H.7Z" stroke="#fff" strokeWidth="1.300" />
        <path d="M10.500 6.500Q12 9 10.500 11.500M13.500 4.500Q16.500 9 13.500 13.500M16.500 1Q22.500 9 16.500 17" stroke="#fff" strokeWidth="1.200" />
      </Svg>
      <T className="ml-[11px] w-[31px] text-[15px]">ENG</T>
      <div className="ml-[10px] flex w-[77px] flex-col items-center text-[14.5px] leading-[23px]">
        <T className="w-[53px]">5:10 PM</T>
        <T className="w-[77px]">11/16/2023</T>
      </div>
      <Svg w={30} h={30} className="mt-[5px] ml-[18px]">
        <path d="M0 2H20V19H14L10 22V19H0Z" fill="#fff" />
        <path d="M4 6.500H16M4 10.500H16M4 14.500H16" stroke="#222" strokeWidth="1.200" />
        <circle cx="19.500" cy="21.500" r="10" fill="#2c2c2e" stroke="#8a8a8a" />
        <text x="19.500" y="26.500" textAnchor="middle" fill="#fff" fontSize="13.500" fontWeight="600">
          8
        </text>
      </Svg>
      <div className="mr-[5px] ml-auto h-full w-px bg-[#77757a]" />
    </div>
  );
}

/* Hand-made notes that float over the editor window. */
function Notes() {
  return (
    <div className="pointer-events-none absolute inset-0 font-[Lato,'Noto_Sans',sans-serif] text-[16.5px] leading-[22px]">
      <Svg w={110} h={200} className="absolute top-[60px] left-[150px]">
        <path d="M41.500 5L9.500 94.500H25.500V184.500H58V94.500H74L42 5" stroke="#ff7f27" strokeWidth="4.600" />
      </Svg>
      <div className="absolute top-[286px] left-[97px] text-[#ed1c24]">
        <T className="w-[199px]">Nhấn phím "P" sau đó chọn</T>
        <T className="w-[87px]">chế độ Path</T>
      </div>
      <T className="absolute top-[284px] left-[486px] w-[98px] text-black">Điểm bắt đầu</T>
      <div className="absolute top-[369px] left-[329px] text-black">
        <T className="w-[166px]">Muốn đóng đường line</T>
        <T className="w-[144px]">lại thì điểm kết thúc</T>
        <T className="w-[165px]">chạm tới điểm bắt đầu</T>
      </div>
      <div className="absolute top-[924px] left-[1554px] font-['Noto_Sans',sans-serif] text-white/40">
        <T className="w-[197px] text-[24px] leading-[32px]">Activate Windows</T>
        <T className="w-[284px] text-[17.500px] leading-[26px]">Go to Settings to activate Windows.</T>
      </div>
    </div>
  );
}

export default function App() {
  return (
    <div className="relative flex h-[1080px] w-[1920px] flex-col overflow-hidden bg-[#3a3a3a] font-['Noto_Sans',sans-serif]">
      <MenuBar />
      <OptionsBar />
      <div className="flex h-[957px] shrink-0">
        <ToolColumn />
        <div className="w-[2px] shrink-0 bg-[#3a3a3a]" />
        <DocumentArea />
        <div className="w-[3px] shrink-0 bg-[#3a3a3a]" />
        <RightDock />
      </div>
      <Taskbar />
      <Notes />
    </div>
  );
}
